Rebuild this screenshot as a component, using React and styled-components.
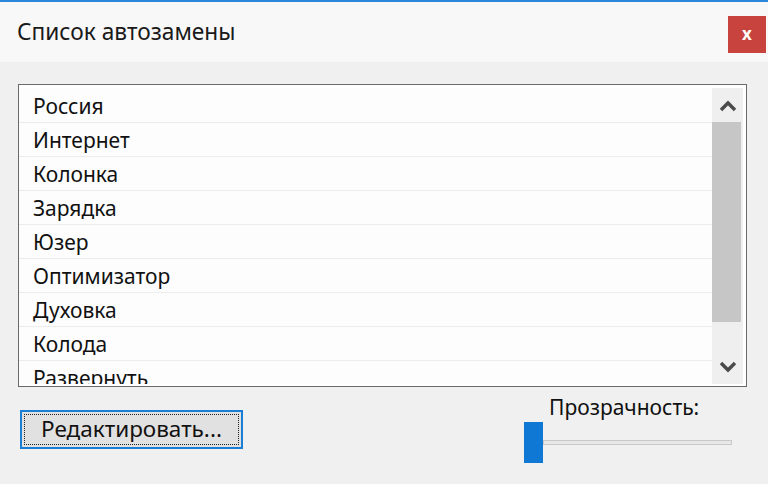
import React from "react";
import styled, { createGlobalStyle } from "styled-components";

const Global = createGlobalStyle`
  html, body { margin: 0; padding: 0; }
  body { width: 768px; height: 484px; overflow: hidden; background: #f0f0f0; font-family: "Noto Sans", "Open Sans", sans-serif; }
`;

const Window = styled.div`
  width: 768px;
  height: 484px;
  display: flex;
  flex-direction: column;
  background: #f0f0f0;
  border-top: 2px solid #2b88d8;
  box-sizing: border-box;
`;

const TitleBar = styled.div`
  height: 60px;
  background: #f8f8f8;
  display: flex;
  align-items: flex-start;
  justify-content: space-between;
  padding: 14px 2px 0 17px;
  box-sizing: border-box;
`;

const Title = styled.div`
  font-size: 22.7px;
  color: #1a1a1a;
  line-height: 30px;
  margin-top: 1px;
`;

const CloseBtn = styled.div`
  width: 38px;
  height: 37px;
  background: #c8433e;
  color: #fff;
  font-size: 17px;
  font-weight: 700;
  display: flex;
  align-items: center;
  justify-content: center;
  line-height: 1;
  padding-bottom: 3px;
  box-sizing: border-box;
`;

const Body = styled.div`
  flex: 1;
  padding: 22px 21px 0 18px;
  display: flex;
  flex-direction: column;
`;

const ListBox = styled.div`
  height: 303px;
  border: 1px solid #6a6a6a;
  background: #fff;
  box-sizing: border-box;
  display: flex;
  padding: 3px 3px 2px 0;
  overflow: hidden;
`;

const Rows = styled.div`
  flex: 1;
  overflow: hidden;
`;

const Row = styled.div`
  height: 34px;
  border-bottom: 1px solid #ececec;
  box-sizing: border-box;
  padding: 2px 0 0 14px;
  font-size: 21px;
  line-height: 31px;
  color: #111;
  white-space: nowrap;
  background: #fdfdfd;
  &:first-child { height: 35px; padding-top: 3px; }
`;

const ScrollBar = styled.div`
  width: 31px;
  display: flex;
  flex-direction: column;
  background: #efefef;
`;

const Arrow = styled.div`
  height: 34px;
  display: flex;
  align-items: center;
  justify-content: center;
  flex-shrink: 0;
`;

const Thumb = styled.div`
  height: 200px;
  background: #c6c6c6;
  margin: 0 2px 0 0;
`;

const Track = styled.div`
  flex: 1;
`;

const Bottom = styled.div`
  display: flex;
  justify-content: space-between;
  padding-right: 15px;
`;

const Button = styled.div`
  margin-top: 23px;
  margin-left: 2px;
  width: 223px;
  height: 39px;
  border: 2px solid #1a7fd4;
  background: #e1e1e1;
  box-sizing: border-box;
  padding: 2px;
  display: flex;
`;

const Focus = styled.div`
  flex: 1;
  border: 1px dotted #222;
  display: flex;
  align-items: center;
  justify-content: center;
  font-size: 22.5px;
  color: #111;
  padding-bottom: 2px;
  white-space: nowrap;
`;

const SliderGroup = styled.div`
  margin-top: 7px;
  width: 208px;
  display: flex;
  flex-direction: column;
`;

const Label = styled.div`
  font-size: 21px;
  color: #111;
  padding-left: 25px;
  line-height: 26px;
  white-space: nowrap;
`;

const SliderRow = styled.div`
  margin-top: 2px;
  display: flex;
  align-items: center;
`;

const SliderThumb = styled.div`
  width: 19px;
  height: 41px;
  background: #0f78d4;
`;

const SliderTrack = styled.div`
  flex: 1;
  height: 5px;
  background: #e7e7e7;
  border: 1px solid #c9c9c9;
  box-sizing: border-box;
`;

const Chevron = ({ up }) => (
  <svg width="18" height="13" viewBox="0 0 18 13">
    <path
      d={up ? "M2 11 L9 4 L16 11" : "M2 2 L9 9 L16 2"}
      fill="none"
      stroke="#4a4a4a"
      strokeWidth="3.4"
    />
  </svg>
);

const items = [
  "Россия",
  "Интернет",
  "Колонка",
  "Зарядка",
  "Юзер",
  "Оптимизатор",
  "Духовка",
  "Колода",
  "Развернуть",
];

export default function App() {
  return (
    <>
      <Global />
      <Window>
        <TitleBar>
          <Title>Список автозамены</Title>
          <CloseBtn>x</CloseBtn>
        </TitleBar>
        <Body>
          <ListBox>
            <Rows>
              {items.map((t) => (
                <Row key={t}>{t}</Row>
              ))}
            </Rows>
            <ScrollBar>
              <Arrow>
                <Chevron up />
              </Arrow>
              <Thumb />
              <Track />
              <Arrow>
                <Chevron />
              </Arrow>
            </ScrollBar>
          </ListBox>
          <Bottom>
            <Button>
              <Focus>Редактировать...</Focus>
            </Button>
            <SliderGroup>
              <Label>Прозрачность:</Label>
              <SliderRow>
                <SliderThumb />
                <SliderTrack />
              </SliderRow>
            </SliderGroup>
          </Bottom>
        </Body>
      </Window>
    </>
  );
}
